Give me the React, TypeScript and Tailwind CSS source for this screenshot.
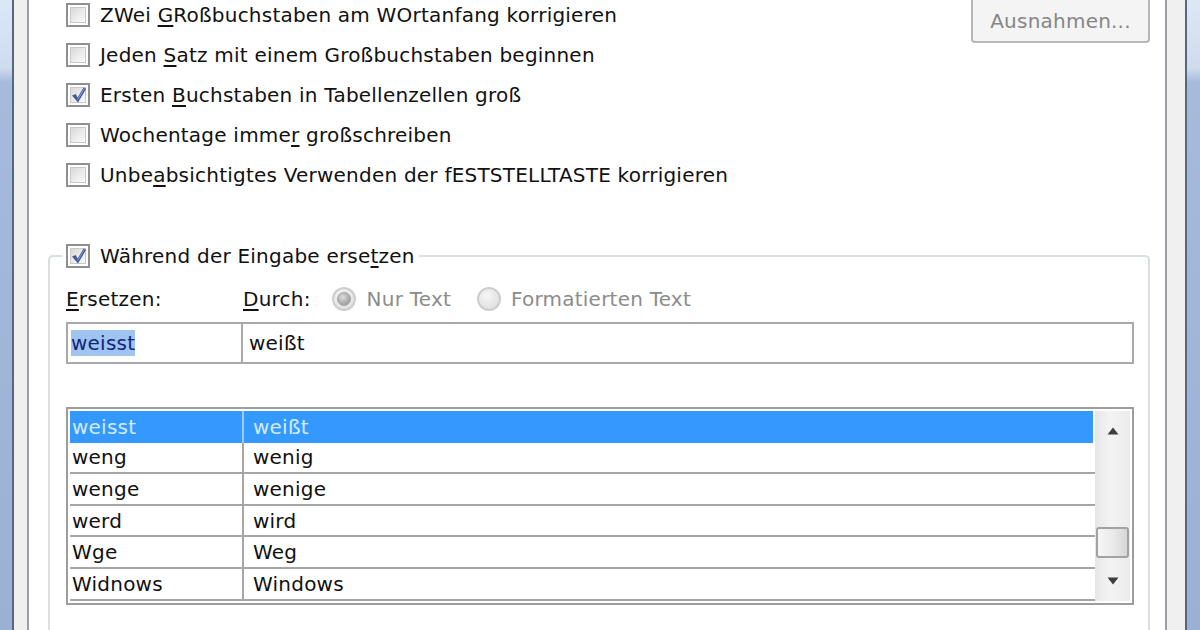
import React from "react";

function CheckBox({ checked }: { checked?: boolean }) {
  return (
    <div className="relative w-[24px] h-[24px] shrink-0 border-2 border-[#8f8f8f] bg-white p-[2px]">
      <div className="w-full h-full border border-[#c9c9c9] bg-[linear-gradient(135deg,#d9d9d9_0%,#ececec_55%,#fbfbfb_100%)]" />
      {checked && (
        <svg className="absolute left-[1px] top-[0px]" width="20" height="20" viewBox="0 0 20 20">
          <path d="M3 10.5 L6.8 9 L8.6 12.6 L14.6 2.6 L17.2 3.8 L9 17.4 Z" fill="#45589a" />
          <path d="M8.6 14.6 L15.4 3.6" stroke="#8a9dd0" strokeWidth="1" />
        </svg>
      )}
    </div>
  );
}

function U({ children }: { children: React.ReactNode }) {
  return <span className="underline underline-offset-[3px] decoration-[1.5px]">{children}</span>;
}

function CheckRow({ checked, children }: { checked?: boolean; children: React.ReactNode }) {
  return (
    <div className="h-[40px] flex items-center gap-[10px]">
      <CheckBox checked={checked} />
      <span className="leading-none whitespace-nowrap">{children}</span>
    </div>
  );
}

function Radio({ selected }: { selected?: boolean }) {
  return (
    <div className="w-[24px] h-[24px] rounded-full border-2 border-[#cdcdcd] bg-[radial-gradient(circle_at_40%_35%,#f6f6f6_0%,#e2e2e2_70%,#d6d6d6_100%)] flex items-center justify-center shrink-0">
      {selected && (
        <div className="w-[14px] h-[14px] rounded-full border border-[#a3a3a3] bg-[radial-gradient(circle_at_40%_35%,#dedede_0%,#adadad_55%,#979797_100%)]" />
      )}
    </div>
  );
}

const rows: [string, string][] = [
  ["weisst", "weißt"],
  ["weng", "wenig"],
  ["wenge", "wenige"],
  ["werd", "wird"],
  ["Wge", "Weg"],
  ["Widnows", "Windows"],
];

const frameBlue =
  "bg-[linear-gradient(to_bottom,#dde8f5_0px,#cfdcee_68px,#a6bbda_82px,#9ab1d5_100%)]";

export default function App() {
  return (
    <div className="w-[1200px] h-[630px] overflow-hidden flex bg-white text-[#111] text-[20px] tracking-[0.22px] font-['DejaVu_Sans','Liberation_Sans',sans-serif]">
      {/* window frame, left */}
      <div className={`w-[12px] ${frameBlue}`} />
      <div className="w-[2px] bg-[#56677e]" />
      <div className="w-[13px] bg-[#f0f0f0]" />
      <div className="w-[2px] bg-[#9b9ea4]" />

      {/* tab page */}
      <main className="flex-1 flex flex-col bg-white">
        <div className="flex justify-between -mt-[5px] pl-[37px] pr-[15px]">
          <div className="flex flex-col">
            <CheckRow>
              ZWei <U>G</U>Roßbuchstaben am WOrtanfang korrigieren
            </CheckRow>
            <CheckRow>
              Jeden <U>S</U>atz mit einem Großbuchstaben beginnen
            </CheckRow>
            <CheckRow checked>
              Ersten <U>B</U>uchstaben in Tabellenzellen groß
            </CheckRow>
            <CheckRow>
              Wochentage imme<U>r</U> großschreiben
            </CheckRow>
            <CheckRow>
              Unbe<U>a</U>bsichtigtes Verwenden der fESTSTELLTASTE korrigieren
            </CheckRow>
          </div>
          <button className="w-[179px] h-[48px] pt-[4px] rounded-[4px] border-2 border-[#b4b8bb] bg-[#f4f4f4] text-[#868686] leading-none">
            Ausnahmen...
          </button>
        </div>

        <fieldset className="flex-1 mt-[49px] ml-[19px] mr-[15px] pl-[16px] pr-[14px] border-2 border-b-0 border-[#dadfe3] rounded-t-[5px] min-w-0">
          <legend className="-ml-[4px] px-[4px] bg-white">
            <div className="flex items-center gap-[10px] h-[24px]">
              <CheckBox checked />
              <span className="leading-none whitespace-nowrap">
                Während der Eingabe erse<U>t</U>zen
              </span>
            </div>
          </legend>

          <div className="mt-[17px] h-[28px] flex items-center">
            <span className="w-[177px] leading-none">
              <U>E</U>rsetzen:
            </span>
            <span className="leading-none">
              <U>D</U>urch:
            </span>
            <div className="ml-[21px] flex items-center gap-[11px] text-[#8c8c8c]">
              <Radio selected />
              <span className="leading-none">Nur Text</span>
            </div>
            <div className="ml-[26px] flex items-center gap-[10px] text-[#8c8c8c]">
              <Radio />
              <span className="leading-none">Formatierten Text</span>
            </div>
          </div>

          <div className="mt-[9px] h-[42px] flex">
            <div className="w-[177px] border-2 border-[#a9a9a9] flex items-center pl-[3px]">
              <span className="bg-[#9ec4ef] text-[#14247c] leading-[26px]">weisst</span>
            </div>
            <div className="flex-1 border-2 border-l-0 border-[#a9a9a9] flex items-center pl-[6px]">
              <span className="leading-none">weißt</span>
            </div>
          </div>

          <div className="mt-[43px] h-[198px] border-2 border-[#9d9d9d] p-[2px] flex">
            <div className="flex-1 flex flex-col">
              {rows.map(([a, b], i) => {
                const sel = i === 0;
                return (
                  <div
                    key={a}
                    className={`h-[31.6px] flex ${
                      sel
                        ? "bg-[#3399ff] text-[#d4eaff] mr-[2px]"
                        : "border-b-2 border-[#a6a6a6]"
                    }`}
                  >
                    <div
                      className={`w-[174px] border-r-2 flex items-center pl-[2px] ${
                        sel ? "border-[#9ccbf8]" : "border-[#a6a6a6]"
                      }`}
                    >
                      <span className="leading-none">{a}</span>
                    </div>
                    <div className="flex-1 flex items-center pl-[9px]">
                      <span className="leading-none">{b}</span>
                    </div>
                  </div>
                );
              })}
            </div>

            {/* vertical scrollbar */}
            <div className="w-[35px] flex flex-col bg-[linear-gradient(to_right,#e6e6e6,#f3f3f3_40%,#ececec)]">
              <div className="h-[40px] flex items-center justify-center">
                <svg width="12" height="8" viewBox="0 0 12 8">
                  <path d="M6 0.5 L11.5 7.5 L0.5 7.5 Z" fill="#3d3d3d" />
                </svg>
              </div>
              <div className="mt-[76px] mx-[1px] h-[31px] rounded-[3px] border-2 border-[#a2a2a2] bg-[linear-gradient(to_right,#f6f6f6,#e9e9e9_55%,#d6d6d6)]" />
              <div className="flex-1" />
              <div className="h-[40px] flex items-center justify-center">
                <svg width="12" height="8" viewBox="0 0 12 8">
                  <path d="M0.5 0.5 L11.5 0.5 L6 7.5 Z" fill="#3d3d3d" />
                </svg>
              </div>
            </div>
          </div>
        </fieldset>
      </main>

      {/* window frame, right */}
      <div className="w-[2px] bg-[#9b9ea4]" />
      <div className="w-[18px] bg-[#f0f0f0]" />
      <div className="w-[2px] bg-[#56677e]" />
      <div className={`w-[13px] ${frameBlue}`} />
    </div>
  );
}
